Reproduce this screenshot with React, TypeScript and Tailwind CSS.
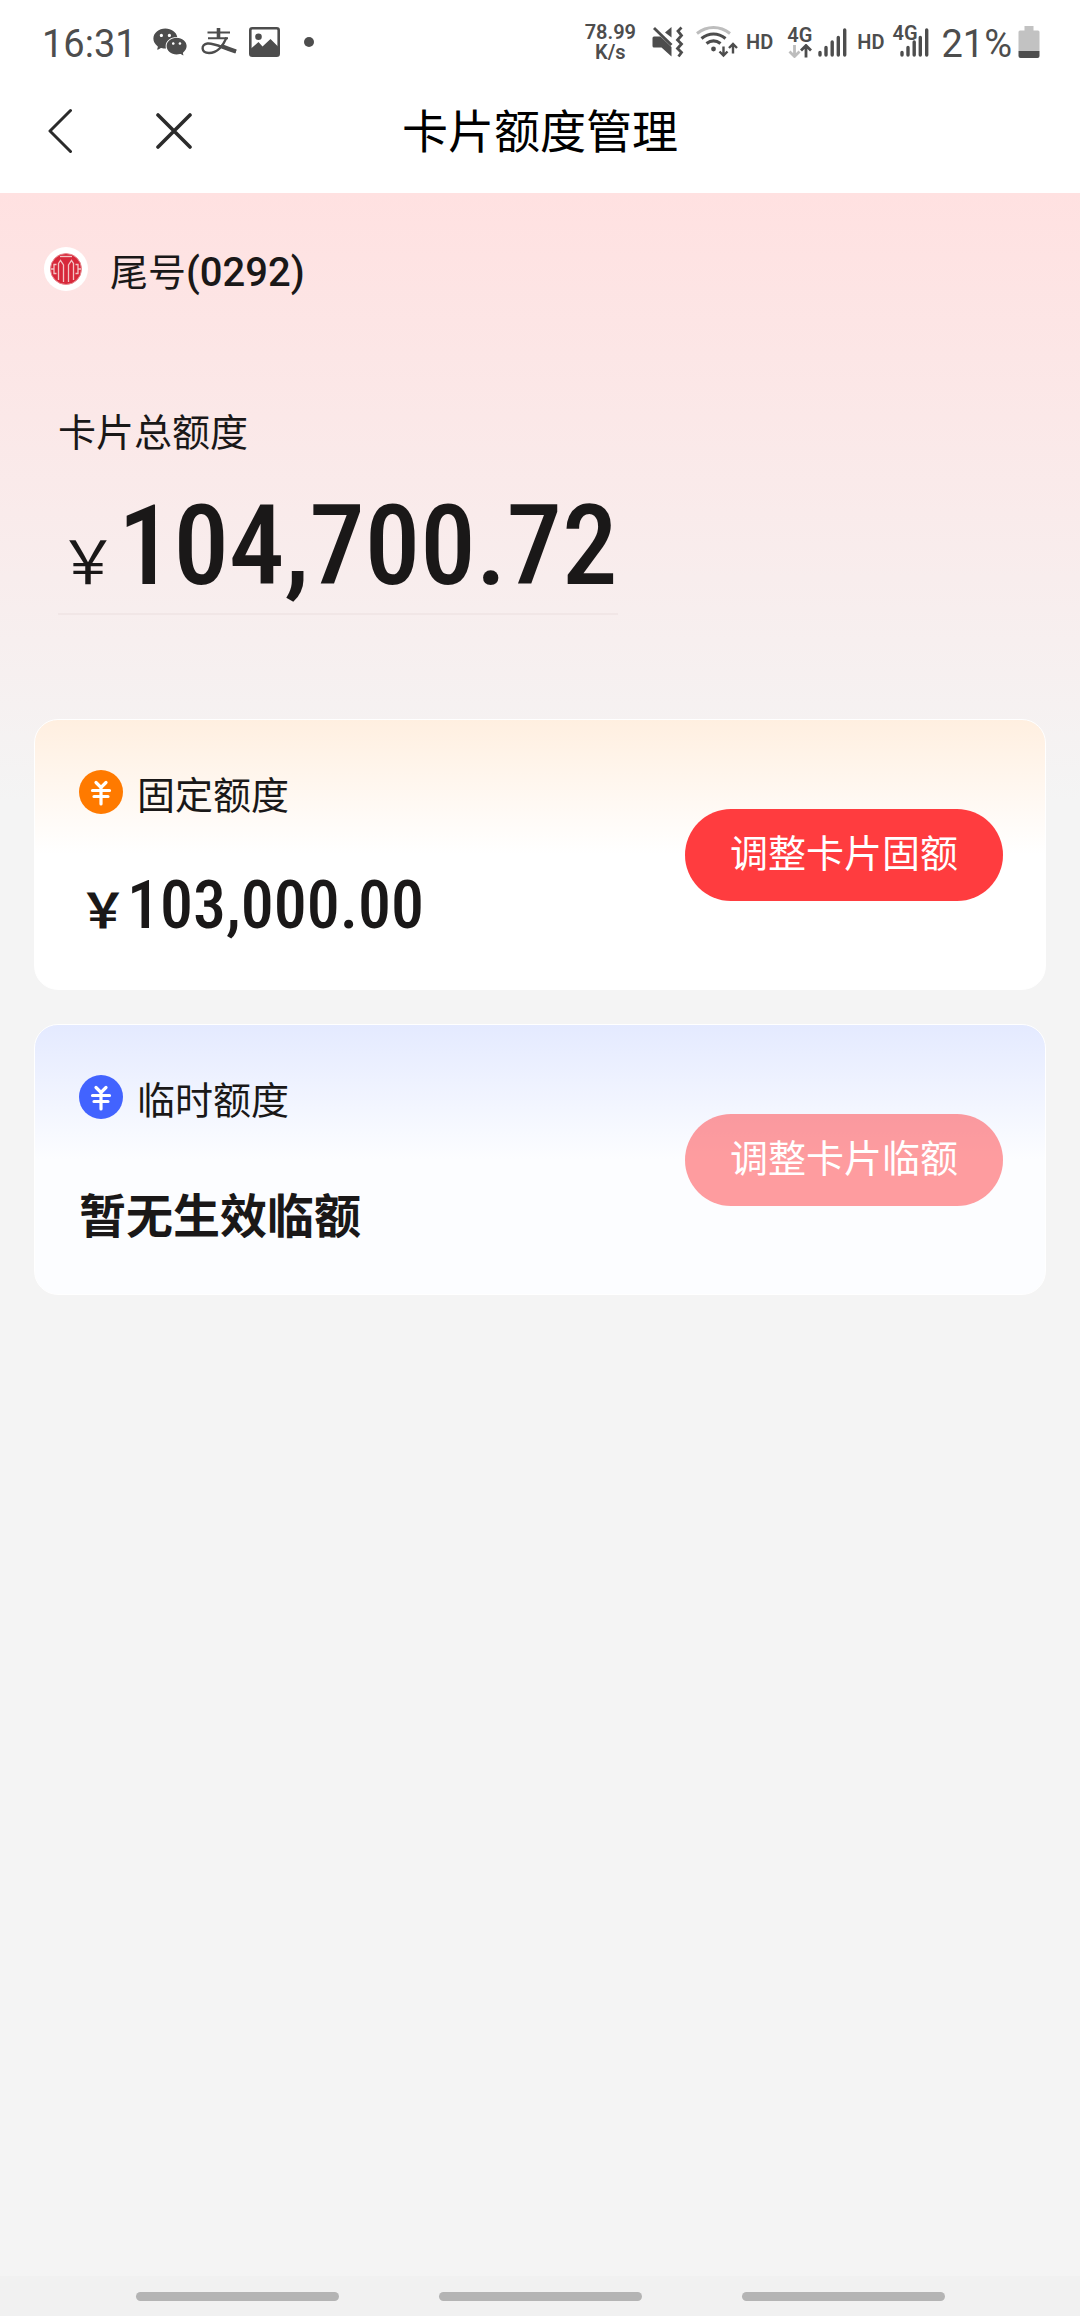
import { AiFillWechat } from 'react-icons/ai';

const PayIcon = () => (
  <svg width="36" height="30" viewBox="0 0 36 30" fill="none" stroke="#4d4d4d">
    <path d="M17.500 1V12" strokeWidth="3.600" />
    <path d="M6.500 5.500H29M7 11.200H27" strokeWidth="2" />
    <path d="M25.500 10.500C22.500 18 16.500 26 8 26C0 26-.5 17.500 6.500 16.500C13 15.700 21 20.500 35 24.500" strokeWidth="2.400" />
    <path d="M20 19C25 21 29 22.500 35 24.500" strokeWidth="4.400" />
  </svg>
);

const GalleryIcon = () => (
  <svg width="31" height="30" viewBox="0 0 31 30">
    <rect x="1.300" y="1.300" width="28.400" height="27.400" rx="2" fill="none" stroke="#4d4d4d" strokeWidth="2.600" />
    <circle cx="9.500" cy="9.800" r="3.300" fill="#4d4d4d" />
    <path d="M2 21.500L9.500 15L13.500 19.500L21.500 12L29 19.500V28.500H2Z" fill="#4d4d4d" />
  </svg>
);

const MuteIcon = () => (
  <svg width="32" height="32" viewBox="0 0 32 32">
    <path d="M2 10.500H8.500L19.500 21V30.500L9.500 21.500H2Q.5 21.500 .5 20V12Q.5 10.500 2 10.500Z" fill="#4d4d4d" />
    <path d="M13 6.500L19.500 1V11.500Z" fill="#4d4d4d" />
    <path d="M2 2L19.500 19" stroke="#4d4d4d" strokeWidth="2.800" />
    <path d="M29.500 1.500L26 5L29.500 9.500L25.500 14L29.500 18L25.500 22.500L29.500 26.500L26.500 30.500" fill="none" stroke="#4d4d4d" strokeWidth="2.800" />
  </svg>
);

const WifiIcon = () => (
  <svg width="42" height="32" viewBox="0 0 42 32" fill="none">
    <path d="M1 7.500C11-.500 24-.500 34 7.500" stroke="#bdbdbd" strokeWidth="3" />
    <path d="M5.500 12.500C13 6.500 22 6.500 29.500 12.500" stroke="#4d4d4d" strokeWidth="3.200" />
    <path d="M10.500 17.500C15 14 20 14 24.500 17.500" stroke="#4d4d4d" strokeWidth="3.200" />
    <circle cx="17.500" cy="23" r="2.400" fill="#4d4d4d" />
    <path d="M27.500 20.500V29M23.500 25.500L27.500 29.500L31.500 25.500M37 27.500V18.500M33 22L37 18L41 22" stroke="#4d4d4d" strokeWidth="2.400" />
  </svg>
);

const DataArrows = () => (
  <svg width="24" height="14" viewBox="0 0 24 14" fill="none" strokeWidth="2.800">
    <path d="M6.500 1V12M1.500 7.500L6.500 12.500L11.500 7.500" stroke="#bdbdbd" />
    <path d="M18 13.500V2M13 6.500L18 1.500L23 6.500" stroke="#4d4d4d" />
  </svg>
);

const SignalBars = () => (
  <svg width="29" height="29" viewBox="0 0 29 29" stroke="#4d4d4d" strokeWidth="3.400" strokeLinecap="round">
    <path d="M2 24.500V27M8 19.500V27M14.200 14V27M20.300 9.500V27M26.700 2V27" />
  </svg>
);

const BatteryIcon = () => (
  <svg width="22" height="32" viewBox="0 0 22 32">
    <path d="M6.500 0H15.500V4.500H20Q21.500 4.500 21.500 6V25H.5V6Q.5 4.500 2 4.500H6.500Z" fill="#c2c2c2" />
    <path d="M.5 25H21.500V30Q21.500 32 19.500 32H2.500Q.5 32 .5 30Z" fill="#4d4d4d" />
  </svg>
);

const BackIcon = () => (
  <svg width="26" height="46" viewBox="0 0 26 46" fill="none" stroke="#2b2b2b" strokeWidth="3" strokeLinecap="round" strokeLinejoin="round">
    <path d="M22.500 2.500L2 23L22.500 43.500" />
  </svg>
);

const CloseIcon = () => (
  <svg width="36" height="36" viewBox="0 0 36 36" fill="none" stroke="#2b2b2b" strokeWidth="3.600" strokeLinecap="round">
    <path d="M2 2L34 34M34 2L2 34" />
  </svg>
);

const BankLogo = () => (
  <svg width="44" height="44" viewBox="0 0 44 44">
    <circle cx="22" cy="22" r="22" fill="#fff" />
    <circle cx="22" cy="22" r="15.500" fill="#d7283a" stroke="#e88a90" />
    <g fill="none" stroke="#f3c4c4" strokeWidth="1.300">
      <path d="M14.500 33V16.500L16.500 13.500L19.500 18V35M29.500 33V16.500L27.500 13.500L24.500 18V35" />
      <path d="M16 9.500H28" />
      <path d="M12.500 17.500H10V26.500H12.500M10 22H7M31.500 17.500H34V26.500H31.500M34 22H37" />
    </g>
  </svg>
);

const CoinIcon = ({ color }: { color: string }) => (
  <svg width="44" height="44" viewBox="0 0 44 44">
    <circle cx="22" cy="22" r="22" fill={color} />
    <path d="M17 12.500L22 17.500L27 12.500M13.500 20.500H30.500M15 26.500H29M22 18V34" fill="none" stroke="#fff" strokeWidth="3.200" strokeLinecap="round" />
  </svg>
);

interface LimitCardProps {
  title: string;
  color: string;
  gradient: string;
  action: string;
  disabled?: boolean;
  children: React.ReactNode;
}

const LimitCard = ({ title, color, gradient, action, disabled, children }: LimitCardProps) => (
  <section className={`flex items-center justify-between rounded-3xl border border-white py-11 pr-[42px] pl-11 ${gradient}`}>
    <div>
      <h2 className="flex items-start gap-3.5 text-[38px] leading-[64px]">
        <span className="pt-1.5"><CoinIcon color={color} /></span>
        {title}
      </h2>
      <div className="mt-[27px] flex h-[90px] items-end">{children}</div>
    </div>
    <button
      disabled={disabled}
      className="h-[92px] rounded-full bg-[#ff3c3f] px-[45px] text-[38px] text-white disabled:bg-[#ff3c3f]/50"
    >
      {action}
    </button>
  </section>
);

export default function App() {
  return (
    <div className="flex min-h-screen flex-col bg-[#f4f4f4] font-['Roboto','Noto_Sans_CJK_SC',sans-serif] text-[#1a1818]">
      <div className="flex h-[84px] items-center justify-between bg-white pr-10 pl-[42px] text-[#4d4d4d]">
        <div className="flex items-center">
          <span className="pt-1 text-[38px]">16:31</span>
          <AiFillWechat size={38} className="ml-3.5" />
          <span className="ml-3"><PayIcon /></span>
          <span className="ml-3"><GalleryIcon /></span>
          <span className="ml-6 size-[10px] rounded-full bg-[#4d4d4d]" />
        </div>
        <div className="flex items-center">
          <div className="text-center text-[20px] leading-5 font-semibold">
            <div>78.99</div>
            <div>K/s</div>
          </div>
          <span className="ml-4"><MuteIcon /></span>
          <span className="ml-3"><WifiIcon /></span>
          <span className="ml-2 text-[20px] font-semibold">HD</span>
          <div className="ml-3.5 flex flex-col items-center">
            <span className="text-[20px] leading-[18px] font-semibold">4G</span>
            <DataArrows />
          </div>
          <span className="ml-1.5"><SignalBars /></span>
          <span className="ml-2.5 text-[20px] font-semibold">HD</span>
          <div className="relative ml-4">
            <SignalBars />
            <span className="absolute -top-1 -left-2 text-[20px] leading-[18px] font-semibold">4G</span>
          </div>
          <span className="ml-3 pt-1 text-[38px]">21%</span>
          <span className="ml-1.5"><BatteryIcon /></span>
        </div>
      </div>

      <header className="grid h-[109px] grid-cols-[1fr_auto_1fr] items-center bg-white px-12 pb-4">
        <div className="flex items-center gap-[82px]">
          <button aria-label="返回"><BackIcon /></button>
          <button aria-label="关闭"><CloseIcon /></button>
        </div>
        <h1 className="pt-1 text-[46px] text-black">卡片额度管理</h1>
      </header>

      <main className="flex-1 bg-[linear-gradient(#ffe1e1,#f4f4f4_608px)] px-[34px]">
        <div className="flex items-start gap-[22px] px-2.5 pt-[50px] text-[38px] leading-[60px]">
          <span className="pt-1"><BankLogo /></span>
          <div>
            尾号<span className="text-[40px] font-medium">(0292)</span>
          </div>
        </div>

        <div className="px-6 pt-[100px]">
          <p className="text-[38px] leading-[60px]">卡片总额度</p>
          <div className="flex h-[152px] w-fit items-baseline border-b-2 border-[#f1e6e6] pt-5 leading-[126px]">
            <span className="font-['Noto_Sans_CJK_SC',sans-serif] text-[60px]">￥</span>
            <span className="font-['Roboto_Condensed','Roboto',sans-serif] text-[111px] font-medium">104,700.72</span>
          </div>
        </div>

        <div className="mt-[104px] flex flex-col gap-[34px]">
          <LimitCard
            title="固定额度"
            color="#ff7a00"
            gradient="bg-[linear-gradient(#ffefe0,#fff_50%)]"
            action="调整卡片固额"
          >
            <p className="flex items-baseline leading-[76px]">
              <span className="font-['Noto_Sans_CJK_SC',sans-serif] text-[48px] font-bold">￥</span>
              <span className="font-['Roboto_Condensed','Roboto',sans-serif] text-[66px] font-medium">103,000.00</span>
            </p>
          </LimitCard>
          <LimitCard
            title="临时额度"
            color="#4263ff"
            gradient="bg-[linear-gradient(#e4eaff,#fcfdff_50%)]"
            action="调整卡片临额"
            disabled
          >
            <p className="text-[47px] leading-[66px] font-bold">暂无生效临额</p>
          </LimitCard>
        </div>
      </main>

      <footer className="flex h-10 items-center justify-center gap-[100px] bg-[#f1f1f1]">
        <span className="h-[9px] w-[203px] rounded-full bg-[#b4b4b4]" />
        <span className="h-[9px] w-[203px] rounded-full bg-[#b4b4b4]" />
        <span className="h-[9px] w-[203px] rounded-full bg-[#b4b4b4]" />
      </footer>
    </div>
  );
}
